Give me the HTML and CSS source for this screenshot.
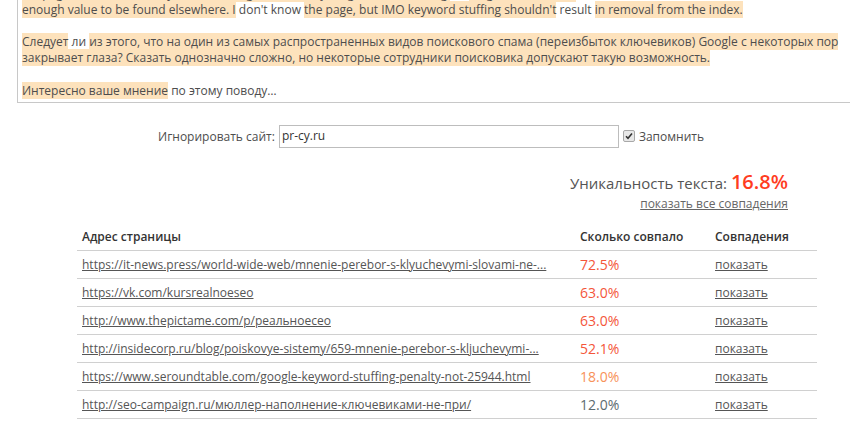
FILE: index.html
```html
<!DOCTYPE html>
<html lang="ru">
<head>
<meta charset="utf-8">
<link rel="stylesheet" href="styles.css">
</head>
<body>
<div class="textbox">
  <div class="textinner">
    <p><span class="hl">If a page is stuffed with keywords, our algorithms will just ignore the stuffing,</span> as <span class="hl">long as there is still</span><br><span class="hl">enough value to be found elsewhere. I</span> don't know <span class="hl">the page, but IMO keyword stuffing shouldn't</span> result <span class="hl">in removal from the index.</span></p>
    <p><span class="hl">Следует</span> ли <span class="hl">из этого, что на один из самых распространенных видов поискового спама (переизбыток ключевиков) Google с некоторых пор</span><br><span class="hl">закрывает глаза? Сказать однозначно сложно, но некоторые сотрудники поисковика допускают такую возможность.</span></p>
    <p><span class="hl">Интересно ваше мнение</span> по этому поводу…</p>
  </div>
</div>

<div class="ignore-row">
  <label class="ignore-label">Игнорировать сайт:</label>
  <div class="ignore-input">pr-cy.ru</div>
  <span class="check"><svg width="10" height="10" viewBox="0 0 10 10"><path d="M2 5.2 L4 7.3 L8 2.6" fill="none" stroke="#333" stroke-width="1.6"/></svg></span>
  <span class="remember">Запомнить</span>
</div>

<div class="results">
  <div class="uniq">
    <div class="uniq-line">Уникальность текста: <span class="uniq-val">16.8%</span></div>
    <a class="uniq-link">показать все совпадения</a>
  </div>
  <table class="matches">
    <thead>
      <tr><th class="c-url">Адрес страницы</th><th class="c-pct">Сколько совпало</th><th class="c-show">Совпадения</th></tr>
    </thead>
    <tbody>
      <tr><td class="c-url"><a>https://it-news.press/world-wide-web/mnenie-perebor-s-klyuchevymi-slovami-ne-...</a></td><td class="c-pct red">72.5%</td><td class="c-show"><a>показать</a></td></tr>
      <tr><td class="c-url"><a>https://vk.com/kursrealnoeseo</a></td><td class="c-pct red">63.0%</td><td class="c-show"><a>показать</a></td></tr>
      <tr><td class="c-url"><a>http://www.thepictame.com/p/реальноесео</a></td><td class="c-pct red">63.0%</td><td class="c-show"><a>показать</a></td></tr>
      <tr><td class="c-url"><a>http://insidecorp.ru/blog/poiskovye-sistemy/659-mnenie-perebor-s-kljuchevymi-...</a></td><td class="c-pct red">52.1%</td><td class="c-show"><a>показать</a></td></tr>
      <tr><td class="c-url"><a>https://www.seroundtable.com/google-keyword-stuffing-penalty-not-25944.html</a></td><td class="c-pct orange">18.0%</td><td class="c-show"><a>показать</a></td></tr>
      <tr><td class="c-url"><a>http://seo-campaign.ru/мюллер-наполнение-ключевиками-не-при/</a></td><td class="c-pct gray">12.0%</td><td class="c-show"><a>показать</a></td></tr>
    </tbody>
  </table>
</div>
</body>
</html>
```

FILE: styles.css
```css
html, body {
  margin: 0;
  padding: 0;
  background: #fff;
  overflow: hidden;
}
body {
  font-family: "Open Sans", "DejaVu Sans", sans-serif;
  color: #4d4d4d;
  font-size: 12px;
  width: 850px;
  height: 427px;
}
.textbox {
  margin-left: 17px;
  width: 860px;
  height: 103px;
  border-left: 1px solid #c8c8c8;
  border-bottom: 1px solid #c8c8c8;
  overflow: hidden;
  box-sizing: border-box;
}
.textinner {
  margin-top: -14px;
  padding-left: 4px;
  width: 840px;
  font-size: 12px;
  line-height: 16px;
  white-space: nowrap;
}
.textinner p {
  margin: 0 0 16px 0;
}
.textinner p:last-child {
  margin-top: 17px;
}
.hl {
  background: #fde2bc;
}
.ignore-row {
  display: flex;
  align-items: center;
  justify-content: center;
  margin-top: 22px;
  padding-left: 12px;
  height: 22px;
}
.ignore-label {
  font-size: 12px;
  margin-right: 4px;
}
.ignore-input {
  width: 334px;
  height: 21px;
  border: 1px solid #bdbdbd;
  padding: 0 2px;
  font-size: 12px;
  line-height: 20px;
  color: #333;
}
.check {
  display: inline-flex;
  align-items: center;
  justify-content: center;
  width: 10px;
  height: 10px;
  border: 1px solid #a8a8a8;
  border-radius: 2px;
  background: #e8e8e8;
  margin: 0 4px 0 4px;
}
.remember {
  font-size: 12px;
}
.results {
  margin-left: 77px;
  width: 740px;
}
.uniq {
  margin-top: 23px;
  text-align: right;
  padding-right: 29px;
}
.uniq-line {
  font-size: 15px;
  line-height: 24px;
  color: #555;
}
.uniq-val {
  font-size: 20px;
  font-weight: 600;
  color: #ff3d1f;
}
.uniq-link {
  display: inline-block;
  font-size: 12px;
  color: #666;
  text-decoration: underline;
  line-height: 16px;
}
.matches {
  width: 740px;
  border-collapse: collapse;
  margin-top: 10px;
}
.matches th {
  text-align: left;
  font-weight: 600;
  font-size: 12px;
  color: #333;
  height: 28px;
  padding: 0 5px;
  border-bottom: 1px solid #d0d0d0;
}
.matches td {
  height: 27px;
  padding: 0 5px;
  border-bottom: 1px solid #d0d0d0;
  font-size: 12px;
}
.matches a {
  color: #555;
  text-decoration: underline;
}
.c-url { width: 488px; }
.c-pct { width: 125px; }
td.c-pct { font-size: 14px; }
.red { color: #f4563a; }
.orange { color: #f7925a; }
.gray { color: #5c6b70; }
```
